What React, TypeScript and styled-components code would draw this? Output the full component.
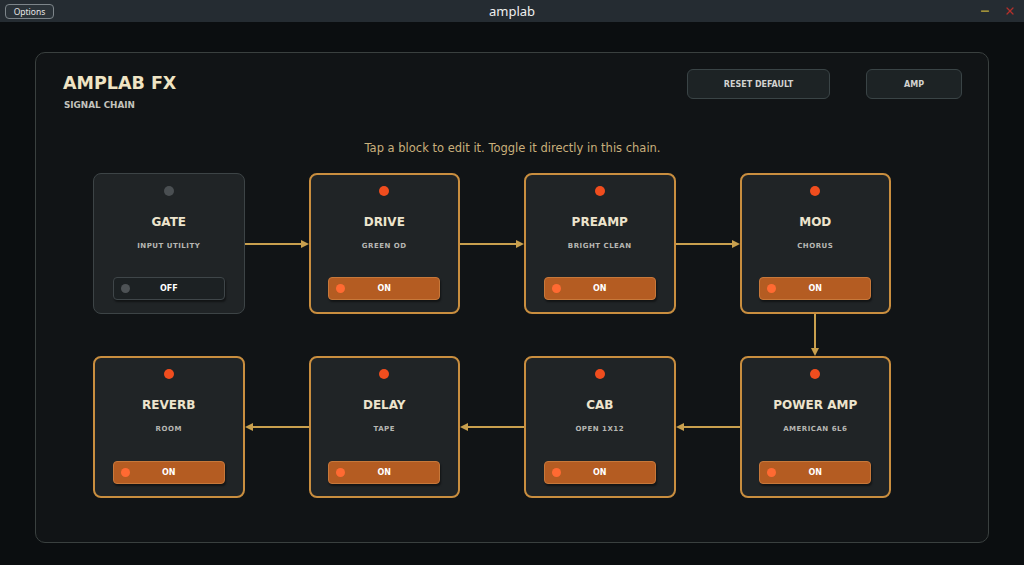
import styled, { createGlobalStyle } from "styled-components";
import { Fragment } from "react";
import { Minus, X } from "lucide-react";

type Block = { name: string; sub: string; on: boolean };

const blocks: Block[] = [
  { name: "GATE", sub: "INPUT UTILITY", on: false },
  { name: "DRIVE", sub: "GREEN OD", on: true },
  { name: "PREAMP", sub: "BRIGHT CLEAN", on: true },
  { name: "MOD", sub: "CHORUS", on: true },
  { name: "POWER AMP", sub: "AMERICAN 6L6", on: true },
  { name: "CAB", sub: "OPEN 1X12", on: true },
  { name: "DELAY", sub: "TAPE", on: true },
  { name: "REVERB", sub: "ROOM", on: true },
];

const GOLD = "#c9a04e";

const Arrow = ({ dir }: { dir: "right" | "left" | "down" }) => {
  if (dir === "down") {
    return (
      <svg width="10" height="42" viewBox="0 0 10 42">
        <line x1="5" y1="0" x2="5" y2="36" stroke={GOLD} strokeWidth="2" />
        <polygon points="1,34 9,34 5,42" fill={GOLD} />
      </svg>
    );
  }
  return (
    <svg width="64" height="10" viewBox="0 0 64 10">
      {dir === "right" ? (
        <>
          <line x1="0" y1="5" x2="58" y2="5" stroke={GOLD} strokeWidth="2" />
          <polygon points="56,1 56,9 64,5" fill={GOLD} />
        </>
      ) : (
        <>
          <line x1="6" y1="5" x2="64" y2="5" stroke={GOLD} strokeWidth="2" />
          <polygon points="8,1 8,9 0,5" fill={GOLD} />
        </>
      )}
    </svg>
  );
};

const Card = ({ block }: { block: Block }) => (
  <CardBox $on={block.on}>
    <Led $on={block.on} />
    <Name>{block.name}</Name>
    <Sub>{block.sub}</Sub>
    <Toggle $on={block.on}>
      <ToggleLed $on={block.on} />
      {block.on ? "ON" : "OFF"}
    </Toggle>
  </CardBox>
);

const App = () => {
  const top = blocks.slice(0, 4);
  const bottom = blocks.slice(4).reverse();
  return (
    <>
      <GlobalStyle />
      <Window>
        <TitleBar>
          <OptionsButton>Options</OptionsButton>
          <WindowTitle>amplab</WindowTitle>
          <Controls>
            <Minus size={12} color="#c9b23c" strokeWidth={2.5} />
            <X size={12} color="#b3302b" strokeWidth={2.5} />
          </Controls>
        </TitleBar>
        <Main>
          <Panel>
            <Header>
              <div>
                <Title>AMPLAB FX</Title>
                <Subtitle>SIGNAL CHAIN</Subtitle>
              </div>
              <Actions>
                <ActionButton $w={143}>RESET DEFAULT</ActionButton>
                <ActionButton $w={96}>AMP</ActionButton>
              </Actions>
            </Header>
            <Hint>Tap a block to edit it. Toggle it directly in this chain.</Hint>
            <Chain>
              {top.map((b, i) => (
                <Fragment key={b.name}>
                  <Card block={b} />
                  {i < 3 && (
                    <HConnector>
                      <Arrow dir="right" />
                    </HConnector>
                  )}
                </Fragment>
              ))}
              <VConnector>
                <Arrow dir="down" />
              </VConnector>
              {bottom.map((b, i) => (
                <Fragment key={b.name}>
                  <Card block={b} />
                  {i < 3 && (
                    <HConnector>
                      <Arrow dir="left" />
                    </HConnector>
                  )}
                </Fragment>
              ))}
            </Chain>
          </Panel>
        </Main>
      </Window>
    </>
  );
};

const GlobalStyle = createGlobalStyle`
  html, body {
    margin: 0;
    padding: 0;
    background: #0b0e10;
    overflow: hidden;
  }
  * {
    box-sizing: border-box;
  }
`;

const Window = styled.div`
  display: flex;
  flex-direction: column;
  width: 1024px;
  height: 565px;
  background: #0b0e10;
  font-family: "DejaVu Sans", Verdana, sans-serif;
`;

const TitleBar = styled.div`
  position: relative;
  display: flex;
  align-items: center;
  justify-content: space-between;
  height: 22px;
  padding: 0 8px 0 5px;
  background: #252c32;
`;

const OptionsButton = styled.button`
  width: 49px;
  height: 15px;
  padding: 0;
  border: 1px solid #7d858a;
  border-radius: 4px;
  background: #2b3339;
  color: #e6e6e6;
  font-family: "Noto Sans", sans-serif;
  font-size: 8.5px;
  line-height: 13px;
`;

const WindowTitle = styled.div`
  position: absolute;
  left: 0;
  right: 0;
  text-align: center;
  color: #f0f0f0;
  font-family: "Noto Sans", sans-serif;
  font-size: 13px;
  line-height: 22px;
  pointer-events: none;
`;

const Controls = styled.div`
  display: flex;
  gap: 13px;
  align-items: center;
`;

const Main = styled.div`
  flex: 1;
  padding: 30px 35px 22px;
`;

const Panel = styled.div`
  height: 100%;
  padding: 16px 26px 0 27px;
  border: 1px solid #3a403f;
  border-radius: 10px;
  background: #111416;
`;

const Header = styled.div`
  display: flex;
  justify-content: space-between;
  align-items: flex-start;
`;

const Title = styled.h1`
  margin: 3px 0 0;
  color: #efe4c3;
  font-size: 17.5px;
  line-height: 22px;
  font-weight: bold;
`;

const Subtitle = styled.div`
  margin-top: 6px;
  padding-left: 1px;
  color: #c3c3bd;
  font-size: 8.8px;
  line-height: 11px;
  font-weight: bold;
`;

const Actions = styled.div`
  display: flex;
  gap: 36px;
`;

const ActionButton = styled.button<{ $w: number }>`
  width: ${(p) => p.$w}px;
  height: 30px;
  border: 1px solid #3a4446;
  border-radius: 6px;
  background: #1d2325;
  color: #d2d2d0;
  font-family: "DejaVu Sans", Verdana, sans-serif;
  font-size: 8px;
  font-weight: bold;
`;

const Hint = styled.p`
  margin: 29px 0 0;
  text-align: center;
  color: #c9b07c;
  font-size: 11.5px;
  line-height: 16px;
`;

const Chain = styled.div`
  display: grid;
  grid-template-columns: 151.5px 64px 151.5px 64px 151.5px 64px 151.5px;
  grid-template-rows: 141px 42px 142px;
  margin: 17px 0 0 30px;

  /* the return row runs right to left under the first */
  & > :nth-child(n + 9) {
    grid-row: 3;
  }
`;

const HConnector = styled.div`
  display: flex;
  align-items: center;
  svg {
    display: block;
  }
`;

const VConnector = styled.div`
  grid-column: 7;
  grid-row: 2;
  display: flex;
  justify-content: center;
  svg {
    display: block;
  }
`;

const CardBox = styled.div<{ $on: boolean }>`
  display: flex;
  flex-direction: column;
  align-items: center;
  padding: ${(p) => (p.$on ? "11px 18px 12px" : "12px 19px 13px")};
  border: ${(p) => (p.$on ? "2px solid #c98e3f" : "1px solid #3d4446")};
  border-radius: 8px;
  background: #202426;
`;

const Led = styled.div<{ $on: boolean }>`
  width: 10px;
  height: 10px;
  border-radius: 50%;
  background: ${(p) => (p.$on ? "#f04d1e" : "#4a4f52")};
`;

const Name = styled.div`
  margin-top: 18px;
  color: #ede4cd;
  font-size: 12px;
  line-height: 16px;
  font-weight: bold;
  white-space: nowrap;
`;

const Sub = styled.div`
  margin-top: 11px;
  color: #b7b7b3;
  font-size: 7px;
  line-height: 10px;
  font-weight: bold;
  letter-spacing: 0.5px;
  white-space: nowrap;
`;

const Toggle = styled.div<{ $on: boolean }>`
  position: relative;
  display: flex;
  align-items: center;
  justify-content: center;
  width: 112px;
  height: 23px;
  margin-top: auto;
  border: 1px solid ${(p) => (p.$on ? "#c7783a" : "#3f4649")};
  border-radius: 4px;
  background: ${(p) => (p.$on ? "#b45c22" : "#1c2123")};
  box-shadow: 1px 2px 2px rgba(0, 0, 0, 0.45);
  color: #ffffff;
  font-size: 8px;
  font-weight: bold;
`;

const ToggleLed = styled.span<{ $on: boolean }>`
  position: absolute;
  left: 7px;
  top: 50%;
  width: 9px;
  height: 9px;
  margin-top: -4.5px;
  border-radius: 50%;
  background: ${(p) => (p.$on ? "#ff6a32" : "#4d5255")};
`;

export default App;
